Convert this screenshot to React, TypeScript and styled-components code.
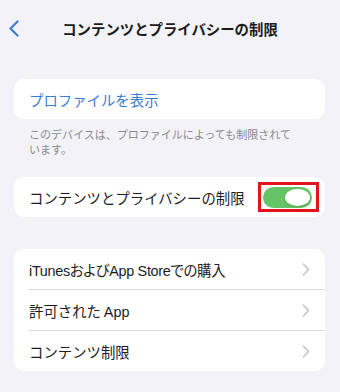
import React from "react";
import styled, { createGlobalStyle } from "styled-components";

const GlobalStyle = createGlobalStyle`
  html, body {
    margin: 0;
    padding: 0;
    background: #f2f2f7;
  }
  body {
    font-family: "Liberation Sans", "Noto Sans CJK JP", sans-serif;
    -webkit-font-smoothing: antialiased;
  }
`;

const Screen = styled.div`
  width: 340px;
  height: 392px;
  background: #f2f2f7;
  display: flex;
  flex-direction: column;
  overflow: hidden;
`;

const Header = styled.header`
  position: relative;
  height: 56px;
  display: flex;
  align-items: center;
  justify-content: center;
`;

const BackButton = styled.button`
  position: absolute;
  left: 6px;
  top: 19px;
  width: 16px;
  height: 18px;
  padding: 0;
  border: none;
  background: none;
  display: flex;
  align-items: center;
  justify-content: center;
`;

const Title = styled.h1`
  margin: 0;
  font-family: "Noto Sans CJK JP", sans-serif;
  font-size: 14.4px;
  font-weight: 700;
  color: #1c1c1e;
`;

const Card = styled.div<{ $top: number }>`
  margin: ${(p) => p.$top}px 15px 0 14px;
  background: #ffffff;
  border-radius: 10px;
  display: flex;
  flex-direction: column;
  overflow: hidden;
`;

const Row = styled.div<{ $right?: number }>`
  height: 40px;
  display: flex;
  align-items: center;
  justify-content: space-between;
  padding: 0 ${(p) => p.$right ?? 15}px 0 15px;
`;

const Label = styled.span<{ $link?: boolean; $proportional?: boolean }>`
  font-family: "Liberation Sans", "Noto Sans CJK JP", sans-serif;
  font-size: 14.4px;
  color: ${(p) => (p.$link ? "#3a7bd5" : "#1c1c1e")};
  white-space: nowrap;
  font-feature-settings: ${(p) => (p.$proportional ? '"palt" 1' : "normal")};
  letter-spacing: ${(p) => (p.$proportional ? "-0.3px" : "0")};
`;

const Separator = styled.div`
  height: 1px;
  margin-left: 14px;
  background: #dcdce0;
`;

const Footnote = styled.p`
  margin: 0;
  padding: 8px 30px 0 29px;
  font-family: "Noto Sans CJK JP", sans-serif;
  font-size: 11px;
  line-height: 14.5px;
  color: #8a8a8e;
`;

const Highlight = styled.div`
  border: 3px solid #e3131e;
  padding: 2px 4px 1px 2px;
  display: flex;
`;

const Toggle = styled.div<{ $on: boolean }>`
  position: relative;
  width: 49px;
  height: 21px;
  border-radius: 11px;
  background: ${(p) => (p.$on ? "#65c466" : "#e5e5ea")};
`;

const Knob = styled.div<{ $on: boolean }>`
  position: absolute;
  top: 2px;
  left: ${(p) => (p.$on ? "22px" : "2px")};
  width: 25px;
  height: 17px;
  border-radius: 50%;
  background: #ffffff;
  box-shadow: 0 1px 2px rgba(0, 0, 0, 0.2);
`;

const Chevron = () => (
  <svg width="8" height="13" viewBox="0 0 8 13" fill="none">
    <path
      d="M1.5 1.2 L6.5 6.5 L1.5 11.8"
      stroke="#c4c4c8"
      strokeWidth="1.6"
      strokeLinecap="round"
      strokeLinejoin="round"
    />
  </svg>
);

const BackChevron = () => (
  <svg width="12" height="17" viewBox="0 0 12 17" fill="none">
    <path
      d="M9.5 1.5 L2.5 8.5 L9.5 15.5"
      stroke="#3a7bd5"
      strokeWidth="2.2"
      strokeLinecap="round"
      strokeLinejoin="round"
    />
  </svg>
);

const menuItems = [
  { text: "iTunesおよびApp Storeでの購入", proportional: true },
  { text: "許可された\u2009App", proportional: false },
  { text: "コンテンツ制限", proportional: false },
];

export default function App() {
  return (
    <>
      <GlobalStyle />
      <Screen>
        <Header>
          <BackButton aria-label="戻る">
            <BackChevron />
          </BackButton>
          <Title>コンテンツとプライバシーの制限</Title>
        </Header>

        <Card $top={23}>
          <Row>
            <Label $link>プロファイルを表示</Label>
          </Row>
        </Card>
        <Footnote>
          このデバイスは、プロファイルによっても制限されて
          <br />
          います。
        </Footnote>

        <Card $top={21}>
          <Row $right={6}>
            <Label>コンテンツとプライバシーの制限</Label>
            <Highlight>
              <Toggle $on>
                <Knob $on />
              </Toggle>
            </Highlight>
          </Row>
        </Card>

        <Card $top={32}>
          {menuItems.map((item, i) => (
            <React.Fragment key={item.text}>
              {i > 0 && <Separator />}
              <Row>
                <Label $proportional={item.proportional}>{item.text}</Label>
                <Chevron />
              </Row>
            </React.Fragment>
          ))}
        </Card>
      </Screen>
    </>
  );
}
